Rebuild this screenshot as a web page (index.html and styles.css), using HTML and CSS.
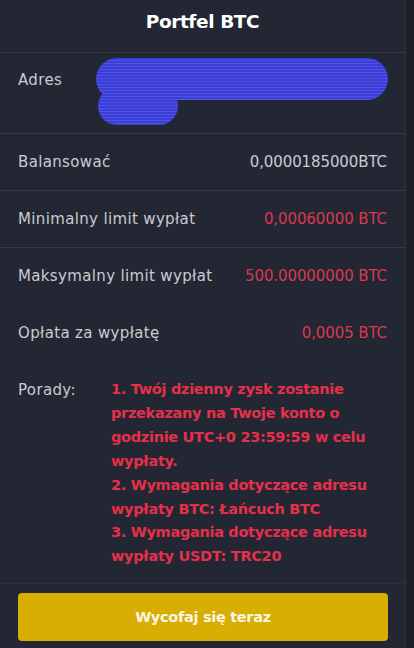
FILE: index.html
```html
<!DOCTYPE html>
<html lang="pl">
<head>
<meta charset="utf-8">
<title>Portfel BTC</title>
<link rel="stylesheet" href="styles.css">
</head>
<body>
<div class="page">
  <div class="panel">
    <div class="title">Portfel BTC</div>
    <div class="row row-addr">
      <span class="label addr-label">Adres</span>
      <svg class="scribble" width="296" height="72" viewBox="0 0 296 72">
        <defs>
          <pattern id="stripes" width="4" height="3" patternUnits="userSpaceOnUse">
            <rect width="4" height="3" fill="#3b3fd8"/>
            <rect width="4" height="1" fill="#5052e6"/>
          </pattern>
        </defs>
        <line x1="21" y1="22" x2="271" y2="22" stroke="url(#stripes)" stroke-width="42" stroke-linecap="round"/>
        <line x1="21" y1="49" x2="63" y2="49" stroke="url(#stripes)" stroke-width="38" stroke-linecap="round"/>
      </svg>
    </div>
    <div class="row">
      <span class="label">Balansować</span>
      <span class="value">0,0000185000BTC</span>
    </div>
    <div class="row">
      <span class="label">Minimalny limit wypłat</span>
      <span class="value red">0,00060000 BTC</span>
    </div>
    <div class="row no-line">
      <span class="label">Maksymalny limit wypłat</span>
      <span class="value red">500.00000000 BTC</span>
    </div>
    <div class="row no-line">
      <span class="label">Opłata za wypłatę</span>
      <span class="value red">0,0005 BTC</span>
    </div>
    <div class="row row-tips">
      <span class="label">Porady:</span>
      <div class="tips">1. Twój dzienny zysk zostanie<br>przekazany na Twoje konto o<br>godzinie UTC+0 23:59:59 w celu<br>wypłaty.<br>2. Wymagania dotyczące adresu<br>wypłaty BTC: Łańcuch BTC<br>3. Wymagania dotyczące adresu<br>wypłaty USDT: TRC20</div>
    </div>
    <div class="actions">
      <button class="btn">Wycofaj się teraz</button>
    </div>
  </div>
  <div class="side"></div>
</div>
</body>
</html>
```

FILE: styles.css
```css
html, body {
  margin: 0;
  padding: 0;
  background: #1c1f27;
  height: 100%;
  overflow: hidden;
}
body {
  font-family: "DejaVu Sans", "Noto Sans", sans-serif;
}
.page {
  display: flex;
  height: 648px;
}
.panel {
  width: 405px;
  background: #232733;
  border-right: 1px solid #2e323d;
  display: flex;
  flex-direction: column;
}
.side {
  flex: 1;
  background: #1d2029;
}
.title {
  height: 52px;
  line-height: 44px;
  text-align: center;
  color: #ffffff;
  font-weight: bold;
  font-size: 18.5px;
  border-bottom: 1px solid #363a45;
  letter-spacing: -0.4px;
}
.row {
  display: flex;
  align-items: center;
  justify-content: space-between;
  height: 56px;
  padding: 0 18px;
  border-bottom: 1px solid #363a45;
}
.row.no-line {
  border-bottom: 1px solid transparent;
}
.row-addr {
  height: 80px;
  justify-content: flex-start;
  align-items: flex-start;
}
.addr-label {
  width: 78px;
  flex: none;
  margin-top: 18px;
}
.scribble {
  margin-top: 4px;
  flex: none;
}
.label {
  color: #c9cbd0;
  font-size: 15px;
  letter-spacing: 0.35px;
}
.value {
  color: #c9cbd0;
  font-size: 15px;
  letter-spacing: -0.1px;
}
.value.red {
  color: #d8394f;
}
.row-tips {
  height: auto;
  align-items: flex-start;
  justify-content: flex-start;
  padding-top: 16px;
  padding-bottom: 14px;
  border-bottom: 1px solid #2d313c;
}
.row-tips .label {
  width: 93px;
  flex: none;
  line-height: 24px;
}
.tips {
  color: #e5304a;
  font-weight: bold;
  font-size: 14.5px;
  line-height: 23.9px;
  letter-spacing: -0.3px;
}
.actions {
  padding: 9px 17px 0 18px;
}
.btn {
  width: 100%;
  height: 48px;
  border: none;
  border-radius: 4px;
  background: #d8ae02;
  color: #fbf6e4;
  font-family: "DejaVu Sans", "Noto Sans", sans-serif;
  font-weight: 600;
  font-size: 14.5px;
  letter-spacing: -0.3px;
}
```
